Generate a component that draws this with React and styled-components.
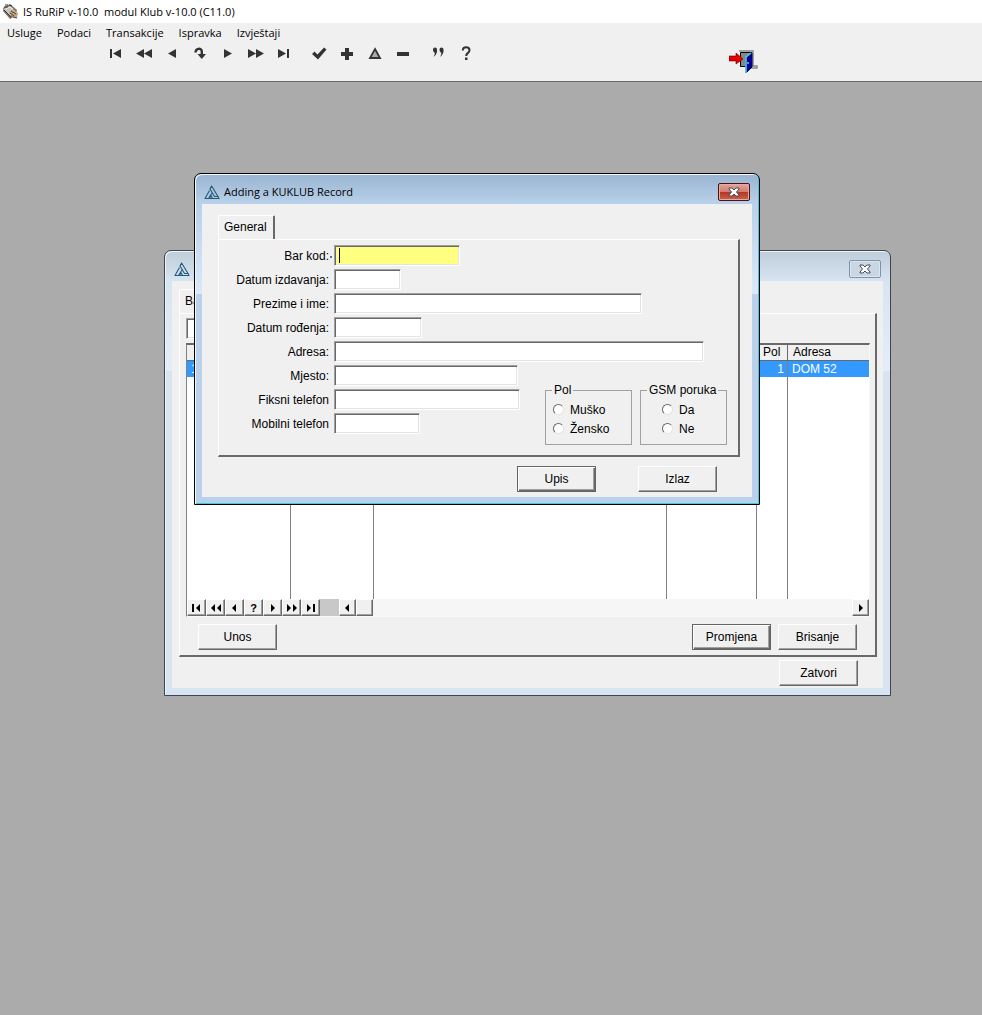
import React from 'react'
import styled, { createGlobalStyle, css } from 'styled-components'

const GlobalStyle = createGlobalStyle`
  * { box-sizing: border-box; }
  body {
    margin: 0;
    background: #ababab;
    color: #000;
    font-family: "Liberation Sans", Arial, sans-serif;
    font-size: 12px;
    line-height: 16px;
  }
  button, input { font: inherit; color: inherit; }
`

const Page = styled.div`
  min-height: 100vh;
  display: flex;
  flex-direction: column;
`
const TitleBar = styled.header`
  height: 23px;
  display: flex;
  align-items: center;
  gap: 4px;
  padding-left: 2px;
  background: #fff;
  font-family: "Open Sans", "Noto Sans", sans-serif;
  font-size: 11px;
  white-space: pre;
`
const Menu = styled.nav`
  height: 20px;
  display: flex;
  align-items: center;
  gap: 15px;
  padding-left: 7px;
  background: #f0f0f0;
  font-family: "Open Sans", "Noto Sans", sans-serif;
  font-size: 11px;
`
const MenuItem = styled.button`
  padding: 0;
  border: 0;
  background: none;
`
const Toolbar = styled.div`
  height: 39px;
  display: flex;
  align-items: flex-start;
  padding-left: 102px;
  background: #f0f0f0;
  border-bottom: 1px solid #696969;
`
const ToolGroup = styled.div`
  display: flex;
  margin-right: 7px;
`
const Tool = styled.button`
  width: 28px;
  height: 20px;
  padding: 0;
  border: 0;
  background: none;
  display: flex;
  align-items: center;
  justify-content: center;
`
const ExitTool = styled(Tool)`
  width: 30px;
  height: 26px;
  margin: 6px 0 0 242px;
`
const Desktop = styled.main`
  flex: 1;
  position: relative;
`

const Frame = styled.section`
  position: absolute;
  left: ${(props) => props.$x}px;
  top: ${(props) => props.$y}px;
  width: ${(props) => props.$width}px;
  padding: 0 7px 7px;
  border: 1px solid #3c4650;
  border-radius: 7px 7px 0 0;
  background: linear-gradient(#bfcddb 0, #d7e4f2 30px, #e4eefa 120px, #d7e4f2 120px);
  box-shadow: inset 1px 1px 0 #eef4fa;
  ${(props) =>
    props.$active &&
    css`
      border-color: #000;
      background: linear-gradient(#99b4d1 0, #b9d1ea 30px, #dbe9f8 120px, #b9d1ea 120px);
      box-shadow: inset 1px 1px 0 #f4f9ff, inset -1px -1px 0 #3cc8e0;
    `}
`
const Caption = styled.header`
  height: 30px;
  display: flex;
  align-items: center;
  gap: 4px;
  padding: 6px 2px 0;
  font-family: "Open Sans", "Noto Sans", sans-serif;
  font-size: 11px;
`
const CaptionText = styled.h1`
  flex: 1;
  margin: 0;
  font-size: 11px;
  font-weight: 400;
`
const Close = styled.button`
  width: 32px;
  height: 18px;
  padding: 0;
  border: 1px solid #8492a6;
  border-radius: 2px;
  background: #c9d6e4;
  box-shadow: inset 0 0 0 1px #dce6f0;
  display: flex;
  align-items: center;
  justify-content: center;
  ${(props) =>
    props.$active &&
    css`
      border-color: #4c1016;
      background: linear-gradient(#e3a599 0, #d07b6c 50%, #b5351f 50%, #c9644e 100%);
      box-shadow: inset 0 0 0 1px #e6aca2;
    `}
`
const Client = styled.div`
  background: #f0f0f0;
  padding: ${(props) => props.$pad};
`
const Tab = styled.button`
  display: block;
  height: 24px;
  padding: 0 6px 2px 5px;
  border: 1px solid #fff;
  border-right: 2px solid #696969;
  border-bottom: 0;
  border-radius: 2px 2px 0 0;
  background: #f0f0f0;
`
const TabPanel = styled.div`
  border: 1px solid #fff;
  border-right: 2px solid #696969;
  border-bottom: 2px solid #696969;
  padding: ${(props) => props.$pad};
`

const Rows = styled.div`
  display: flex;
  flex-direction: column;
  gap: 3px;
`
const Row = styled.div`
  display: flex;
  align-items: center;
  gap: 5px;
`
const Label = styled.label`
  position: relative;
  width: 110px;
  text-align: right;
`
const Mark = styled.span`
  position: absolute;
  right: -3px;
  top: 8px;
  width: 2px;
  height: 2px;
  background: #6a6aa8;
`
const TextBox = styled.input`
  width: ${(props) => props.$width}px;
  height: 21px;
  padding: 0 4px;
  border: 1px solid;
  border-color: #a0a0a0 #fff #fff #a0a0a0;
  outline: 0;
  background: #fff;
  box-shadow: inset 1px 1px 0 #696969, inset -1px -1px 0 #e3e3e3;
  ${(props) =>
    props.$current &&
    css`
      background: linear-gradient(#000, #000) 4px 2px / 1px 15px no-repeat, #ffff80;
    `}
`
const FormBottom = styled.div`
  display: flex;
  justify-content: space-between;
  align-items: flex-end;
  margin-top: 3px;
`
const LowerRows = styled(Rows)`
  padding-bottom: 11px;
`
const Groups = styled.div`
  display: flex;
  gap: 8px;
`
const Group = styled.fieldset`
  width: 87px;
  height: 63px;
  margin: 0;
  padding: 2px 0 0 ${(props) => props.$indent}px;
  border: 1px solid #a0a0a0;
`
const Legend = styled.legend`
  margin-left: ${(props) => props.$shift}px;
  padding: 0 2px;
`
const Choice = styled.label`
  display: flex;
  align-items: center;
  gap: 6px;
  height: 19px;
`
const Radio = styled.input`
  appearance: none;
  width: 11px;
  height: 11px;
  margin: 0;
  border: 1px solid;
  border-color: #696969 #e3e3e3 #e3e3e3 #696969;
  border-radius: 50%;
  background: #fff;
`
const Button = styled.button`
  width: 79px;
  height: 26px;
  padding: 0;
  border: 1px solid;
  border-color: #fff #696969 #696969 #fff;
  background: #f0f0f0;
  box-shadow: inset -1px -1px 0 #a0a0a0;
  ${(props) =>
    props.$default &&
    css`
      border-color: #646464;
      box-shadow: inset 1px 1px 0 #fff, inset -1px -1px 0 #696969, inset -2px -2px 0 #a0a0a0;
    `}
`
const Actions = styled.div`
  display: flex;
  justify-content: flex-end;
  gap: ${(props) => props.$gap}px;
  padding: ${(props) => props.$pad};
`
const PushLeft = styled(Button)`
  margin-right: auto;
`

const Browse = styled.div`
  margin-top: 4px;
  border: 1px solid;
  border-color: #696969 #f8f8f8 #f8f8f8 #808080;
  border-top-width: 2px;
  background: #fff;
`
const Table = styled.table`
  width: 100%;
  table-layout: fixed;
  border-collapse: separate;
  border-spacing: 0;
`
const Col = styled.col`
  width: ${(props) => (props.$width ? props.$width + 'px' : 'auto')};
`
const Th = styled.th`
  height: 16px;
  padding: 0 5px;
  border-right: 1px solid #696969;
  border-bottom: 1px solid #696969;
  background: #f0f0f0;
  line-height: 15px;
  font-weight: 400;
  text-align: left;
  &:nth-child(5) { padding: 0 0 0 6px; }
  &:last-child { border-right: 0; }
`
const Td = styled.td`
  height: 16px;
  padding: 0 4px;
  border-right: 1px solid #808080;
  background: #3399ff;
  color: #fff;
  &:nth-child(5) { text-align: right; padding-right: 3px; }
  &:last-child { border-right: 0; }
`
const Blank = styled(Td)`
  height: 222px;
  background: #fff;
`
const ScrollRow = styled.div`
  display: flex;
  height: 17px;
  background: #f6f6f6;
`
const NavButton = styled.button`
  width: ${(props) => props.$width || 19}px;
  height: 17px;
  padding: 0;
  border: 1px solid;
  border-color: #fff #696969 #696969 #fff;
  background: #f0f0f0;
  box-shadow: inset -1px -1px 0 #a0a0a0;
  font-weight: 700;
  font-size: 11px;
  line-height: 14px;
  display: flex;
  align-items: center;
  justify-content: center;
`
const NavGap = styled.span`
  width: 19px;
  background: #c8c8c8;
`
const Track = styled.span`
  flex: 1;
`

const AppIcon = () => (
  <svg width="17" height="17" viewBox="0 0 17 17">
    <path d="M1 5 8 1l7 6-2 6-5 3-7-8z" fill="#77736d" />
    <path d="M1 6 8 3l6 6-6 4z" fill="#c9c4bb" />
    <path d="M3 2h3M2 4h4M7 2l3 1M2 7l7 7" stroke="#333" fill="none" />
    <path d="m8 8 4-1 4 3-1 5-4-1-4-4z" fill="#c5a482" />
    <path d="m9 8 5 3M8 10l4 3M11 14l4 1" stroke="#4f3c30" fill="none" />
    <path d="m4 6 4-2 3 2" stroke="#eee" fill="none" />
  </svg>
)

const Logo = () => (
  <svg width="16" height="15" viewBox="0 0 16 15" fill="none" stroke="#245878" strokeWidth="1.1" strokeLinejoin="round">
    <path d="M6 4 7.600 1 14 11.500H10.500z" />
    <path d="M5.500 5.500 1 13.500h3.500L8 8" />
    <path d="M7 10.500 8.500 13.500H15l-1-2M7 10.500l-1.500 3h3" />
  </svg>
)

const CloseX = () => (
  <svg width="12" height="10" viewBox="0 0 12 10">
    <path d="M1 1h3l2 2 2-2h3v1L8.500 5 11 8v1H8L6 7 4 9H1V8l2.500-3L1 2z" fill="#fff" stroke="#454b5b" />
  </svg>
)

const toolShapes = {
  first: <path d="M2 4h2v9H2zM13 4v9L5 8.500z" />,
  rewind: <path d="M8 4v9L0 8.500zM16 4v9L8 8.500z" />,
  prev: <path d="M12 4v9L4 8.500z" />,
  redo: (
    <>
      <path d="M3.500 7.500C3.500 3.200 9.500 2.300 9.800 6.500V10" fill="none" stroke="#333" strokeWidth="2.400" />
      <path d="M5.500 9h8.500l-4.200 5z" />
    </>
  ),
  next: <path d="M4 4v9l8-4.500z" />,
  forward: <path d="M0 4v9l8-4.500zM8 4v9l8-4.500z" />,
  last: <path d="M2 4v9l8-4.500zM11 4h2v9h-2z" />,
  check: <path d="m1 9 2.500-2.500 3 3L13 2.500l2.500 2L7 14.500z" />,
  plus: <path d="M6 3h4v4h4v4h-4v4H6v-4H2V7h4z" />,
  change: <path d="M8 4 13 13H3z" fill="#aaa" stroke="#333" strokeWidth="1.800" />,
  minus: <path d="M2 7h12v4H2z" />,
  quotes: <path d="M3 4.500a2 2 0 1 1 4 0c.5 3-1 6-3.500 7.500C4.300 10.500 5 9 4.700 7.500 3.500 7.500 3 6 3 4.500zM9.500 4.500a2 2 0 1 1 4 0c.5 3-1 6-3.500 7.500.8-1.500 1.500-3 1.200-4.500-1.200 0-1.700-1.500-1.700-3z" />,
  help: (
    <>
      <path d="M4.800 5.500C4.800 1 11.500 1.300 11.500 5.200 11.500 8 8.200 7.800 8.200 11" fill="none" stroke="#333" strokeWidth="2" />
      <path d="M7 12.500h2.500V15H7z" />
    </>
  ),
}

const ToolIcon = ({ name }) => (
  <svg width="16" height="17" viewBox="0 0 16 17" fill="#333">{toolShapes[name]}</svg>
)

const ExitIcon = () => (
  <svg width="30" height="26" viewBox="0 0 30 26">
    <path d="M10 2h14v15h4v2h-6" fill="none" stroke="#888" strokeWidth="1.500" />
    <path d="M11.500 3.500h11v14h-11z" fill="#878787" stroke="#000" />
    <path d="m17 8 6-4v14l-6 6z" fill="#00009c" stroke="#000050" />
    <path d="M17 8v16M17 8l5-4" stroke="#49d9f0" strokeWidth="1.500" />
    <path d="M19 13v2" stroke="#fff" />
    <path d="M0 7h7V4l7 6-7 5v-3H0z" fill="#e00000" stroke="#700000" strokeWidth=".6" />
  </svg>
)

const navShapes = {
  first: 'M1 1h2v8H1zM9 1v8L5 5z',
  rewind: 'M5 1v8L1 5zM11 1v8L7 5z',
  prev: 'M7 1v8L3 5z',
  next: 'M4 1v8l4-4z',
  forward: 'M1 1v8l4-4zM7 1v8l4-4z',
  last: 'M2 1v8l4-4zM8 1h2v8H8z',
}

const NavIcon = ({ name }) => (
  <svg width="12" height="10" viewBox="0 0 12 10"><path d={navShapes[name]} /></svg>
)

const menuItems = ['Usluge', 'Podaci', 'Transakcije', 'Ispravka', 'Izvještaji']
const toolGroups = [
  ['first', 'rewind', 'prev', 'redo', 'next', 'forward', 'last'],
  ['check', 'plus', 'change', 'minus'],
  ['quotes', 'help'],
]
const fields = [
  { id: 'barkod', label: 'Bar kod:', width: 126, current: true },
  { id: 'izdavanje', label: 'Datum izdavanja:', width: 67 },
  { id: 'ime', label: 'Prezime i ime:', width: 308 },
  { id: 'rodjenje', label: 'Datum rođenja:', width: 88 },
  { id: 'adresa', label: 'Adresa:', width: 370 },
]
const lowerFields = [
  { id: 'mjesto', label: 'Mjesto:', width: 184 },
  { id: 'fiksni', label: 'Fiksni telefon', width: 186 },
  { id: 'mobilni', label: 'Mobilni telefon', width: 86 },
]
const columns = [104, 83, 293, 90, 31, 0]

const Field = ({ id, label, width, current }) => (
  <Row>
    <Label htmlFor={id}>{label}{current && <Mark />}</Label>
    <TextBox id={id} type="text" $width={width} $current={current} />
  </Row>
)

const RadioGroup = ({ name, title, options, indent, shift }) => (
  <Group $indent={indent}>
    <Legend $shift={shift}>{title}</Legend>
    {options.map((option) => (
      <Choice key={option}>
        <Radio type="radio" name={name} value={option} />
        {option}
      </Choice>
    ))}
  </Group>
)

const BrowseWindow = () => (
  <Frame $x={164} $y={168} $width={727}>
    <Caption>
      <Logo />
      <CaptionText />
      <Close aria-label="Close"><CloseX /></Close>
    </Caption>
    <Client $pad="8px 6px 2px 7px">
      <Tab>Bar kod</Tab>
      <TabPanel $pad="4px 5px 5px 6px">
        <Row>
          <TextBox type="text" aria-label="Bar kod" $width={120} />
        </Row>
        <Browse>
          <Table>
            <colgroup>
              {columns.map((width, i) => <Col key={i} $width={width} />)}
            </colgroup>
            <thead>
              <tr><Th /><Th /><Th /><Th /><Th>Pol</Th><Th>Adresa</Th></tr>
            </thead>
            <tbody>
              <tr><Td>1</Td><Td /><Td /><Td /><Td>1</Td><Td>DOM 52</Td></tr>
              <tr>{columns.map((width, i) => <Blank key={i} />)}</tr>
            </tbody>
          </Table>
          <ScrollRow>
            <NavButton aria-label="First"><NavIcon name="first" /></NavButton>
            <NavButton aria-label="Page up"><NavIcon name="rewind" /></NavButton>
            <NavButton aria-label="Previous"><NavIcon name="prev" /></NavButton>
            <NavButton>?</NavButton>
            <NavButton aria-label="Next"><NavIcon name="next" /></NavButton>
            <NavButton aria-label="Page down"><NavIcon name="forward" /></NavButton>
            <NavButton aria-label="Last"><NavIcon name="last" /></NavButton>
            <NavGap />
            <NavButton aria-label="Scroll left" $width={17}><NavIcon name="prev" /></NavButton>
            <NavButton aria-label="Thumb" $width={17} />
            <Track />
            <NavButton aria-label="Scroll right" $width={17}><NavIcon name="next" /></NavButton>
          </ScrollRow>
        </Browse>
        <Actions $gap={7} $pad="7px 13px 0 12px">
          <PushLeft>Unos</PushLeft>
          <Button $default>Promjena</Button>
          <Button>Brisanje</Button>
        </Actions>
      </TabPanel>
      <Actions $gap={7} $pad="3px 19px 0 0">
        <Button>Zatvori</Button>
      </Actions>
    </Client>
  </Frame>
)

const RecordWindow = () => (
  <Frame $x={194} $y={91} $width={566} $active>
    <Caption>
      <Logo />
      <CaptionText>Adding a KUKLUB Record</CaptionText>
      <Close $active aria-label="Close"><CloseX /></Close>
    </Caption>
    <Client $pad="11px 12px 5px 16px">
      <Tab>General</Tab>
      <TabPanel $pad="5px 11px 10px 0">
        <Rows>
          {fields.map((field) => <Field key={field.id} {...field} />)}
        </Rows>
        <FormBottom>
          <LowerRows>
            {lowerFields.map((field) => <Field key={field.id} {...field} />)}
          </LowerRows>
          <Groups>
            <RadioGroup name="pol" title="Pol" options={['Muško', 'Žensko']} indent={7} shift={-1} />
            <RadioGroup name="gsm" title="GSM poruka" options={['Da', 'Ne']} indent={21} shift={-15} />
          </Groups>
        </FormBottom>
      </TabPanel>
      <Actions $gap={42} $pad="9px 23px 0 0">
        <Button $default>Upis</Button>
        <Button>Izlaz</Button>
      </Actions>
    </Client>
  </Frame>
)

function App() {
  return (
    <Page>
      <GlobalStyle />
      <TitleBar><AppIcon />{'IS RuRiP v-10.0  modul Klub v-10.0 (C11.0)'}</TitleBar>
      <Menu>
        {menuItems.map((item) => <MenuItem key={item}>{item}</MenuItem>)}
      </Menu>
      <Toolbar>
        {toolGroups.map((group, i) => (
          <ToolGroup key={i}>
            {group.map((name) => (
              <Tool key={name} aria-label={name}><ToolIcon name={name} /></Tool>
            ))}
          </ToolGroup>
        ))}
        <ExitTool aria-label="exit"><ExitIcon /></ExitTool>
      </Toolbar>
      <Desktop>
        <BrowseWindow />
        <RecordWindow />
      </Desktop>
    </Page>
  )
}

export default App
